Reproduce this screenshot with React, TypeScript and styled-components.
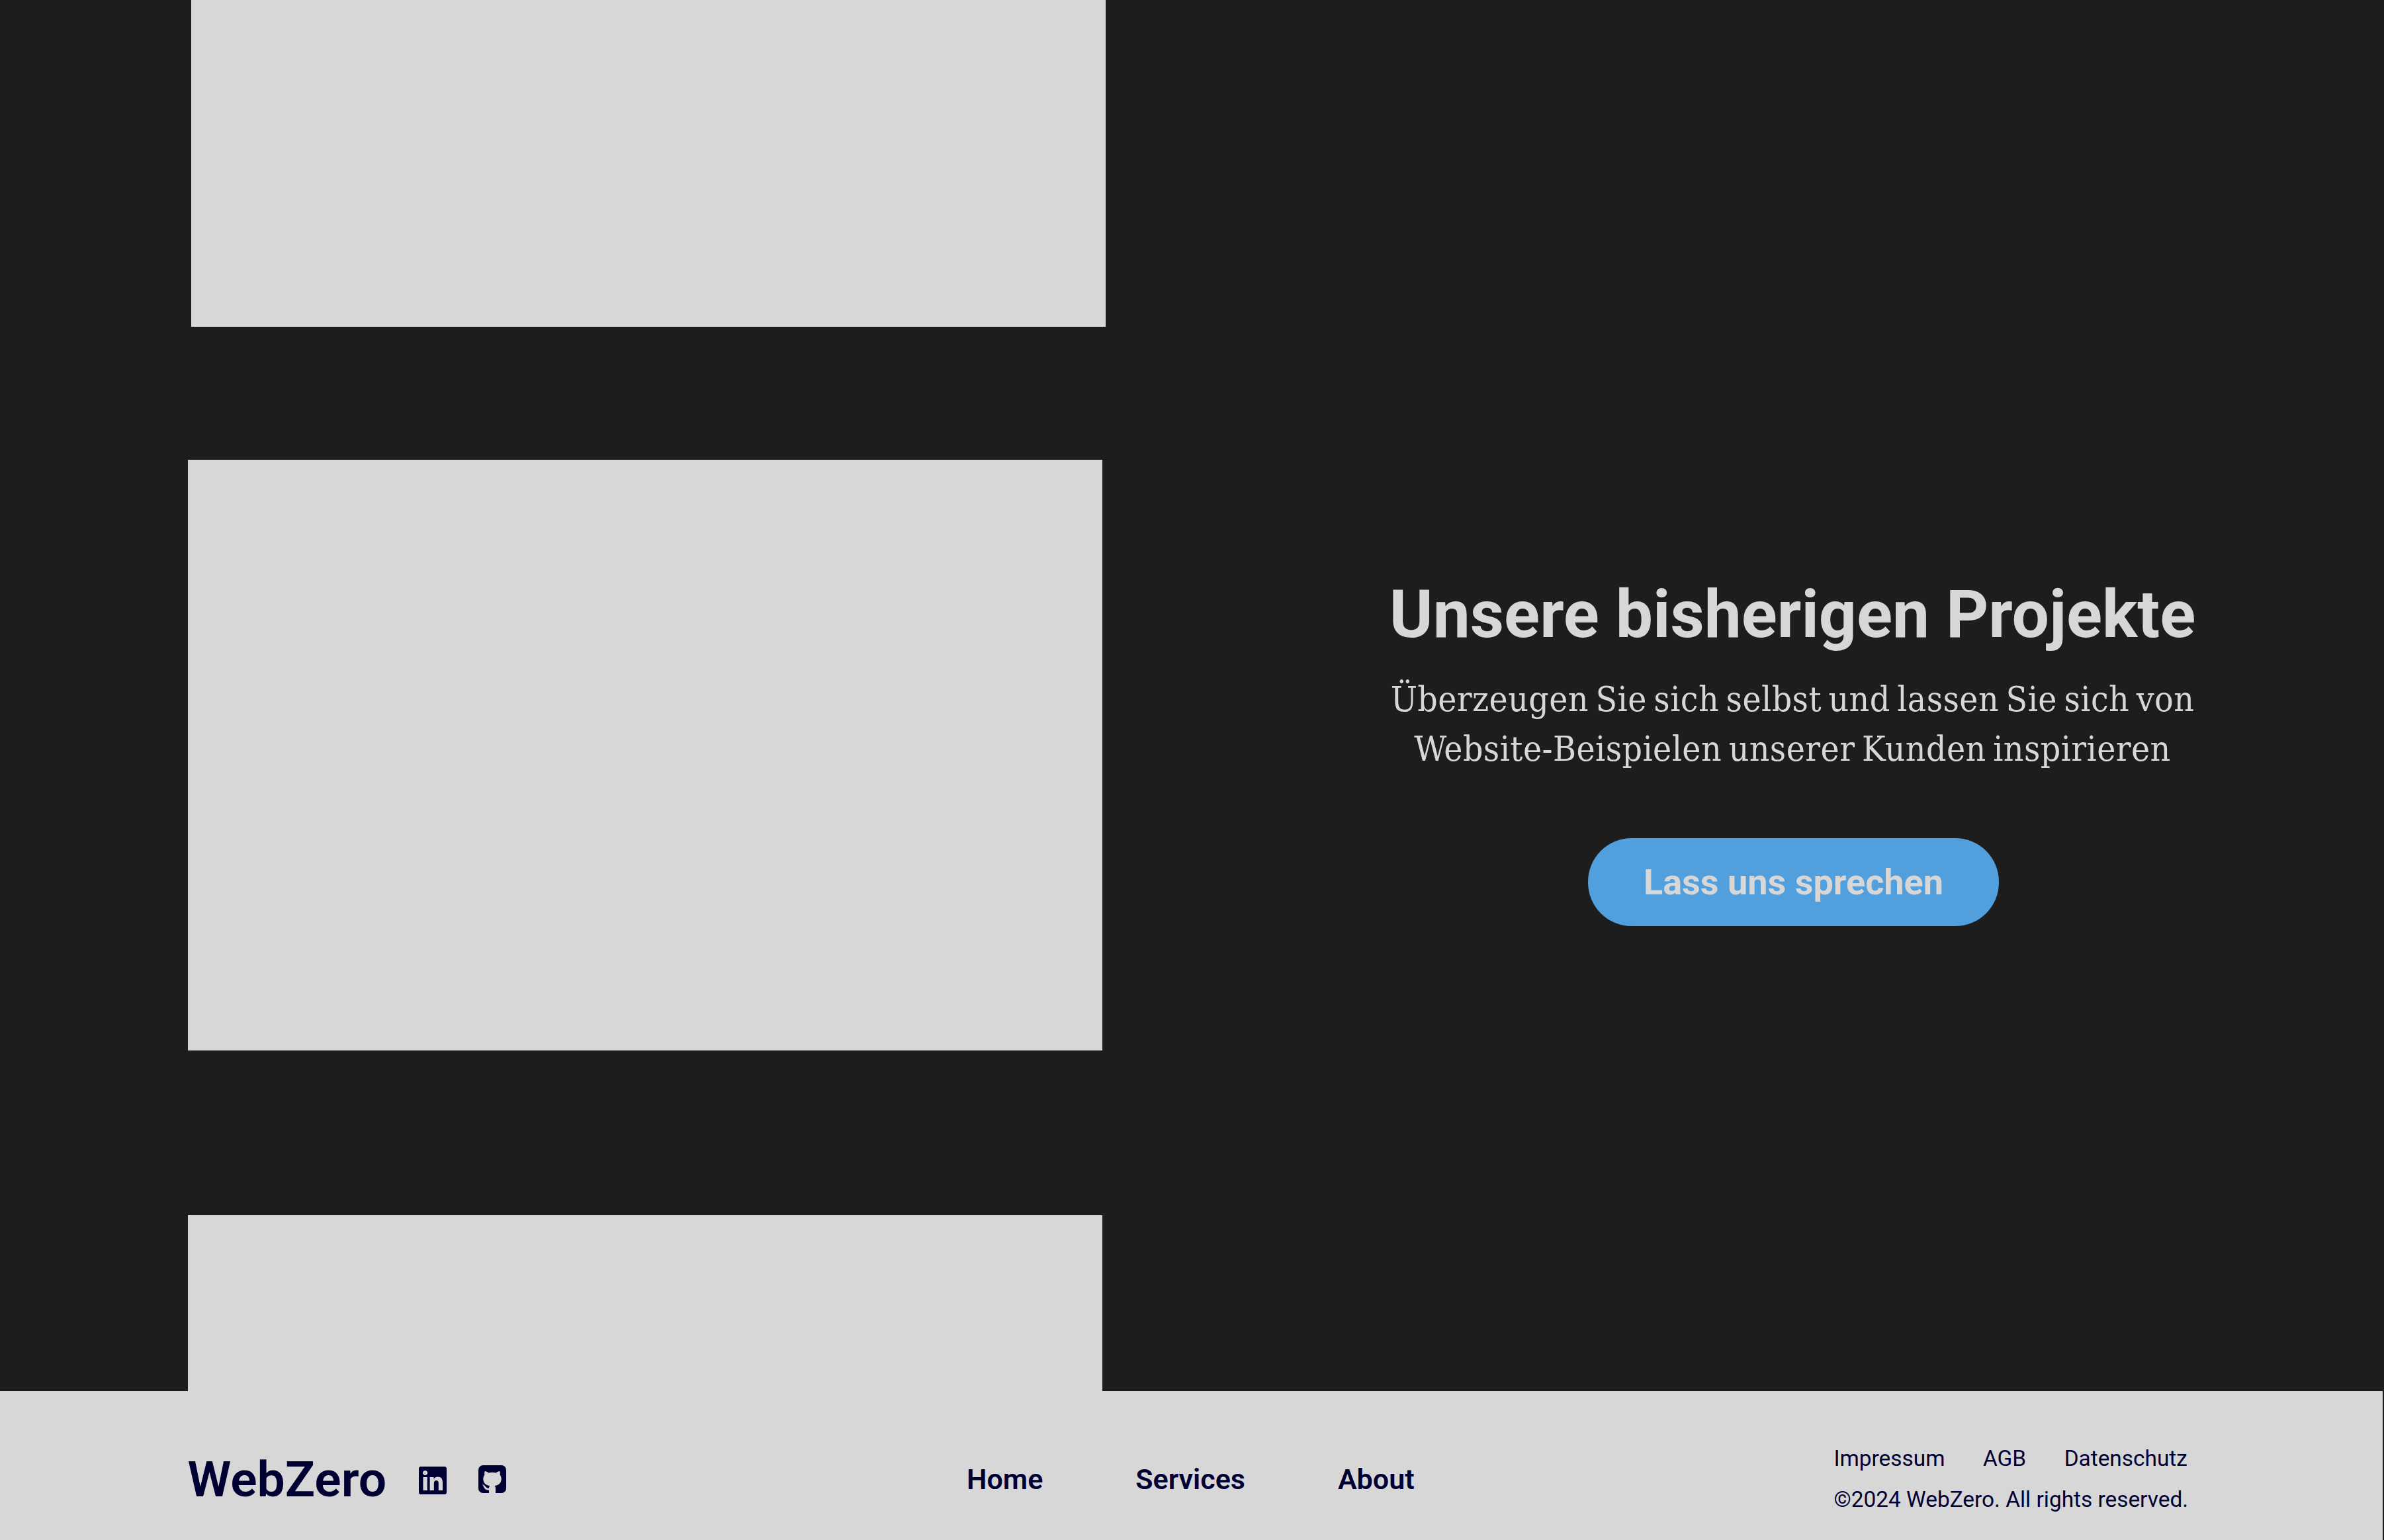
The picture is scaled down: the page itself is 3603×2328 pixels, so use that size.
import styled, { createGlobalStyle } from "styled-components";
import { FaLinkedin } from "react-icons/fa6";

const GlobalStyle = createGlobalStyle`
  html, body {
    margin: 0;
    padding: 0;
    background: #1d1d1d;
    font-family: Roboto, "Liberation Sans", sans-serif;
  }
`;

// rounded square with the octocat cut out, the cat's body runs off the bottom edge
function GithubSquare() {
  return (
    <svg width="42" height="42" viewBox="0 0 42 42" fill="currentColor">
      <path
        fillRule="evenodd"
        d="M7 0H35a7 7 0 0 1 7 7V35a7 7 0 0 1-7 7H7a7 7 0 0 1-7-7V7a7 7 0 0 1 7-7Z
           M16 42V37.5C12 38 9.5 36.5 8 32.5C7.5 31 6.5 30 6 29.3C7.5 29 9.5 30.5 10.5 32C12 34 14 35 16 34.5
           C16.1 33 16.5 32 17.5 31C11.5 30.5 7.3 27 7.3 20.5C7.3 18 8.2 16 9.5 14.5C9 13 9 11 9.7 9
           C11.5 9 13.5 10 15.5 11.5C17.2 11 19 10.8 21 10.8C23 10.8 24.8 11 26.5 11.5C28.5 10 30.5 9 32.3 9
           C33 11 33 13 32.5 14.5C33.8 16 34.7 18 34.7 20.5C34.7 27 30.5 30.5 24.5 31C25.5 32 26 33.5 26 35.5V42Z"
      />
    </svg>
  );
}

export default function App() {
  return (
    <Page>
      <GlobalStyle />
      <Main>
        <Card $height={493.5} $shift={5} $after={201.5} />
        <ProjectRow>
          <Card $height={893} />
          <Intro>
            <Title>Unsere bisherigen Projekte</Title>
            <Lead>
              Überzeugen Sie sich selbst und lassen Sie sich von
              <br />
              Website-Beispielen unserer Kunden inspirieren
            </Lead>
            <CallToAction>Lass uns sprechen</CallToAction>
          </Intro>
        </ProjectRow>
        <Card $height={266} $before={249} />
      </Main>

      <Footer>
        <Brand>
          <Logo>WebZero</Logo>
          <Socials>
            <SocialLink $drop={4}>
              <FaLinkedin />
            </SocialLink>
            <SocialLink>
              <GithubSquare />
            </SocialLink>
          </Socials>
        </Brand>

        <Nav>
          <NavLink>Home</NavLink>
          <NavLink>Services</NavLink>
          <NavLink>About</NavLink>
        </Nav>

        <Legal>
          <LegalLinks>
            <LegalLink>Impressum</LegalLink>
            <LegalLink>AGB</LegalLink>
            <LegalLink>Datenschutz</LegalLink>
          </LegalLinks>
          <Copyright>©2024 WebZero. All rights reserved.</Copyright>
        </Legal>
      </Footer>
    </Page>
  );
}

const Page = styled.div`
  width: 3603px;
  height: 2328px;
  overflow: hidden;
`;

const Main = styled.main`
  height: 2103px;
  padding-left: 283.5px;
  box-sizing: border-box;
  overflow: hidden;
  background: #1d1d1d;
`;

const Card = styled.div<{ $height: number; $shift?: number; $before?: number; $after?: number }>`
  flex: none;
  width: 1382.5px;
  height: ${({ $height }) => $height}px;
  margin-left: ${({ $shift }) => $shift ?? 0}px;
  margin-top: ${({ $before }) => $before ?? 0}px;
  margin-bottom: ${({ $after }) => $after ?? 0}px;
  background: #d7d7d7;
`;

const ProjectRow = styled.section`
  display: flex;
  align-items: center;
`;

const Intro = styled.div`
  width: 1220px;
  margin-left: 433px;
  padding-bottom: 13px;
  display: flex;
  flex-direction: column;
  align-items: center;
  text-align: center;
  color: #d7d7d7;
`;

const Title = styled.h2`
  margin: 0;
  font-size: 100px;
  font-weight: 700;
  line-height: 118px;
  white-space: nowrap;
`;

const Lead = styled.p`
  margin: 31px 0 0;
  font-family: "DejaVu Serif Condensed", "DejaVu Serif", serif;
  font-size: 53px;
  font-weight: 400;
  line-height: 75px;
  letter-spacing: 0.4px;
  word-spacing: -5px;
  white-space: nowrap;
`;

const CallToAction = styled.button`
  width: 621px;
  height: 133px;
  margin: 98px 0 0 3px;
  border: none;
  border-radius: 66px;
  background: #529fdd;
  color: #d7d7d7;
  font-family: inherit;
  font-size: 54px;
  font-weight: 700;
`;

const Footer = styled.footer`
  width: 3601px;
  height: 225px;
  padding: 41px 0 0 283.5px;
  box-sizing: border-box;
  display: grid;
  grid-template-columns: 1177.5px 1310.5px auto;
  align-items: center;
  background: #d7d7d7;
  color: #000033;
`;

const Brand = styled.div`
  display: flex;
  align-items: center;
  gap: 46px;
`;

const Logo = styled.div`
  font-size: 75px;
  font-weight: 600;
`;

const Socials = styled.div`
  display: flex;
  align-items: center;
  gap: 45px;
`;

const SocialLink = styled.a<{ $drop?: number }>`
  display: flex;
  font-size: 48px;
  margin-top: ${({ $drop }) => $drop ?? 0}px;
`;

const Nav = styled.nav`
  display: flex;
  gap: 140px;
`;

const NavLink = styled.a`
  font-size: 43px;
  font-weight: 600;
`;

const Legal = styled.div`
  display: flex;
  flex-direction: column;
  gap: 23px;
  margin-top: -2px;
  font-size: 33.4px;
`;

const LegalLinks = styled.div`
  display: flex;
  gap: 57.5px;
`;

const LegalLink = styled.a``;

const Copyright = styled.div``;
